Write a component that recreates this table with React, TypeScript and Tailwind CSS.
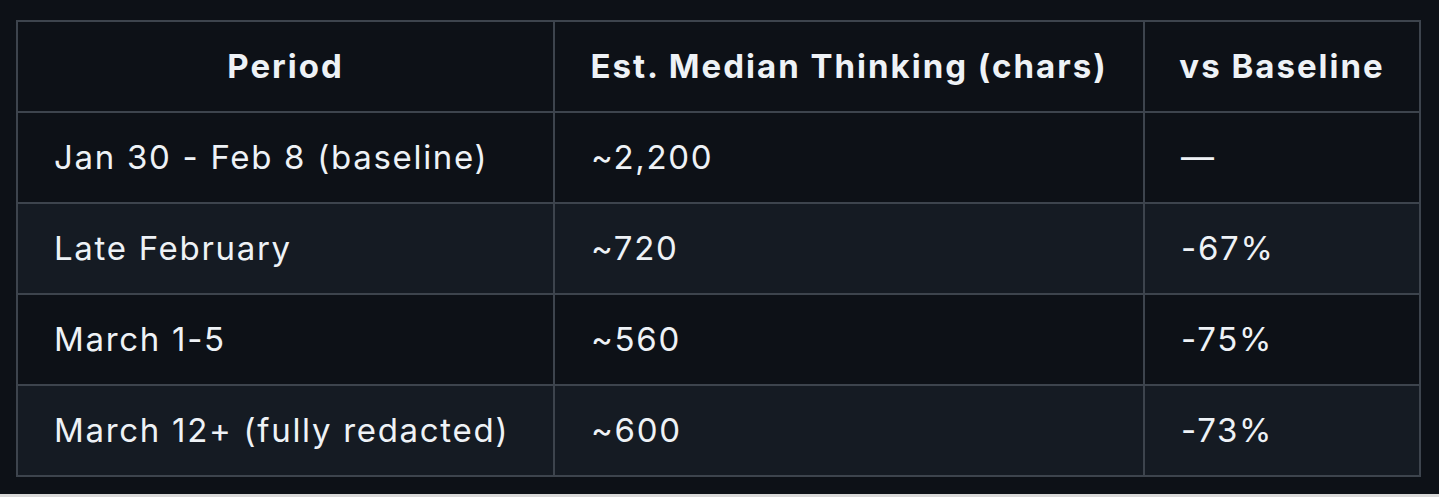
import React from 'react';

interface Row {
  period: string;
  median: string;
  delta: string;
}

const rows: Row[] = [
  { period: 'Jan 30 - Feb 8 (baseline)', median: '~2,200', delta: '\u2014' },
  { period: 'Late February', median: '~720', delta: '-67%' },
  { period: 'March 1-5', median: '~560', delta: '-75%' },
  { period: 'March 12+ (fully redacted)', median: '~600', delta: '-73%' },
];

const App: React.FC = () => {
  return (
    <div
      className="w-[1439px] h-[497px] flex flex-col bg-[#0d1117] text-[#eef2f6]"
      style={{ fontFamily: 'Inter, "Noto Sans", "Liberation Sans", sans-serif' }}
    >
      <div className="flex-1 pt-[20px] pl-[16px]">
        <table className="table-fixed border-collapse w-[1403px] text-[33px] tracking-[1.7px]">
          <colgroup>
            <col className="w-[537px]" />
            <col className="w-[590px]" />
            <col className="w-[276px]" />
          </colgroup>
          <thead>
            <tr className="bg-[#0d1117]">
              {['Period', 'Est. Median Thinking (chars)', 'vs Baseline'].map((h) => (
                <th key={h} className="h-[91px] border-2 border-[#3d444d] px-[16px] font-bold text-center tracking-[2px] whitespace-nowrap">
                  {h}
                </th>
              ))}
            </tr>
          </thead>
          <tbody>
            {rows.map((r, i) => (
              <tr key={r.period} className={i % 2 === 1 ? 'bg-[#151b23]' : 'bg-[#0d1117]'}>
                <td className="h-[91px] border-2 border-[#3d444d] px-[36px] whitespace-nowrap">{r.period}</td>
                <td className="h-[91px] border-2 border-[#3d444d] px-[36px]">{r.median}</td>
                <td className="h-[91px] border-2 border-[#3d444d] px-[36px]">{r.delta}</td>
              </tr>
            ))}
          </tbody>
        </table>
      </div>
      <div className="h-[3px] bg-[#d9d9d9]" />
    </div>
  );
};

export default App;
